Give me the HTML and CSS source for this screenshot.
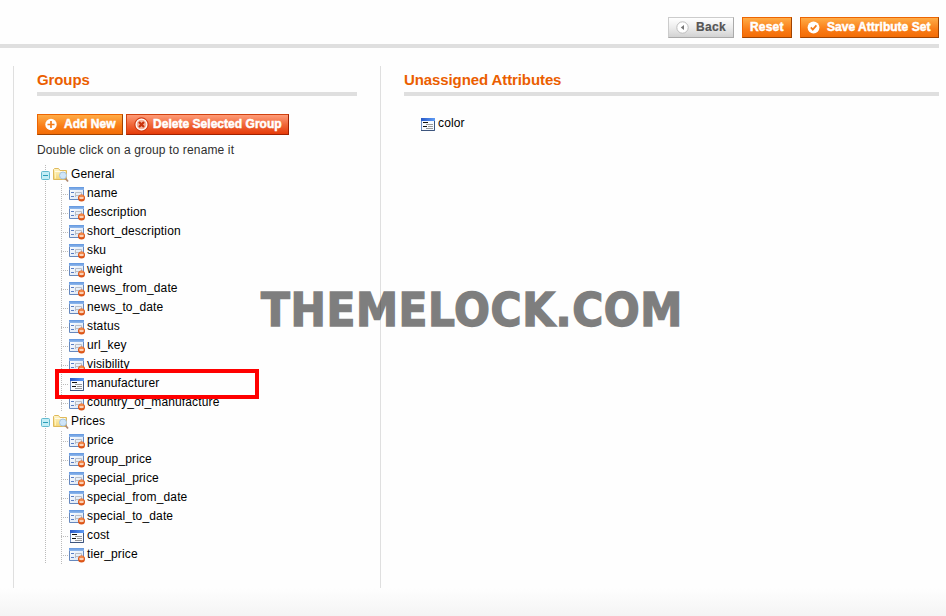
FILE: index.html
```html
<!DOCTYPE html>
<html lang="en">
<head>
<meta charset="utf-8">
<title>Edit Attribute Set</title>
<link rel="stylesheet" href="styles.css">
</head>
<body>
<svg class="defs" width="0" height="0" aria-hidden="true">
  <defs>
    <linearGradient id="blue" x1="0" y1="0" x2="0" y2="1"><stop offset="0" stop-color="#6196df"/><stop offset="1" stop-color="#91b9ec"/></linearGradient>
    <linearGradient id="royal" x1="0" y1="0" x2="1" y2="0"><stop offset="0" stop-color="#2859c8"/><stop offset="1" stop-color="#5f9cf5"/></linearGradient>
    <linearGradient id="paper" x1="0" y1="0" x2="1" y2="1"><stop offset="0" stop-color="#fff"/><stop offset="1" stop-color="#d5e3f5"/></linearGradient>
    <linearGradient id="gold" x1="0" y1="0" x2="0" y2="1"><stop offset="0" stop-color="#fff6cb"/><stop offset="1" stop-color="#f3d577"/></linearGradient>
    <symbol id="sys" viewBox="0 0 16 16">
      <path d="M.5 1.500h14v12H.5z" fill="url(#paper)" stroke="#6688bd"/>
      <path d="M0 1h15v3H0z" fill="url(#blue)"/>
      <path d="M2 6.500h3M2 10.500h3" stroke="#5b7fc4"/>
      <path d="M6.500 11V6.500H12.500V9.500H7" fill="none" stroke="#b9bec6"/>
      <circle cx="12.500" cy="12" r="3.500" fill="#dc5518"/>
      <circle cx="12.500" cy="11.200" r="2.400" fill="#f28a4b"/>
      <path d="M10.500 12h4" stroke="#fff" stroke-width="1.200"/>
    </symbol>
    <symbol id="attr" viewBox="0 0 16 16">
      <path d="M1.500 2.500h13v12h-13z" fill="#f7faff" stroke="#6f8fc4"/>
      <path d="M1 2h14v3H1z" fill="url(#royal)"/>
      <path d="M3 6.500h5M3 10.500h4" stroke="#111"/>
      <path d="M6 8.500h7M6 12.500h7M8 10.500h5" stroke="#9a9a9a"/>
      <path d="M1 14.500h13.500V5" fill="none" stroke="#3d557d"/>
    </symbol>
    <symbol id="folder" viewBox="0 0 16 16">
      <path d="M.5 12.500V2.500L1.500 1.500H5.500L7 3.500H13.500V12.500z" fill="url(#gold)" stroke="#dfb95b"/>
      <path d="M2 4.500h10" stroke="#fffbe8"/>
      <path d="M2.500 5.500v6" stroke="#fff3bb"/>
      <circle cx="10" cy="8.500" r="3.500" fill="#cfe5f7" stroke="#a5c4e2"/>
      <path d="M12.500 11.500L15 14.500" stroke="#b08a70" stroke-width="1.800"/>
    </symbol>
    <symbol id="minus" viewBox="0 0 9 9">
      <rect x=".5" y=".5" width="8" height="8" rx="1" fill="#c3eef6" stroke="#62b9ce"/>
      <path d="M2 4.500h5" stroke="#2c9db8"/>
    </symbol>
  </defs>
</svg>
<header class="toolbar">
  <button class="btn back"><svg width="13" height="13" viewBox="0 0 13 13"><circle cx="6.500" cy="6.500" r="5.700" fill="#fff" stroke="#bdbdbd"/><path d="M8 4v5L4.800 6.500z" fill="#777"/></svg><span>Back</span></button>
  <button class="btn reset"><span>Reset</span></button>
  <button class="btn save"><svg width="13" height="13" viewBox="0 0 13 13"><circle cx="6.500" cy="6.500" r="5.900" fill="#fff"/><path d="M3.800 6.400l2 2.200 3.600-4.200" fill="none" stroke="#f47d1c" stroke-width="1.700"/></svg><span>Save Attribute Set</span></button>
</header>
<main class="columns">
  <section class="groups">
    <h2><span>Groups</span></h2>
    <div class="actions">
      <button class="btn add"><svg width="13" height="13" viewBox="0 0 13 13"><circle cx="6" cy="6.500" r="5.700" fill="#fff"/><path d="M6 3v7M2.500 6.500h7" stroke="#f47d1c" stroke-width="1.700"/></svg><span>Add New</span></button>
      <button class="btn delete"><svg width="15" height="15" viewBox="0 0 15 15"><circle cx="7.500" cy="7.500" r="6.700" fill="#e0542b" stroke="#cf3a12"/><circle cx="7.500" cy="7.500" r="5.400" fill="#f4b39c" stroke="#fff" stroke-width="1.200"/><path d="M5 5l5 5M10 5l-5 5" stroke="#c9320c" stroke-width="2.200"/></svg><span>Delete Selected Group</span></button>
    </div>
    <p class="hint"><span>Double click on a group to rename it</span></p>
    <div class="tree">
      <div class="group">
        <div class="folder"><svg class="toggle"><use href="#minus"/></svg><svg class="icon"><use href="#folder"/></svg><span>General</span></div>
        <ul>
          <li><svg class="icon"><use href="#sys"/></svg><span>name</span></li>
          <li><svg class="icon"><use href="#sys"/></svg><span>description</span></li>
          <li><svg class="icon"><use href="#sys"/></svg><span>short_description</span></li>
          <li><svg class="icon"><use href="#sys"/></svg><span>sku</span></li>
          <li><svg class="icon"><use href="#sys"/></svg><span>weight</span></li>
          <li><svg class="icon"><use href="#sys"/></svg><span>news_from_date</span></li>
          <li><svg class="icon"><use href="#sys"/></svg><span>news_to_date</span></li>
          <li><svg class="icon"><use href="#sys"/></svg><span>status</span></li>
          <li><svg class="icon"><use href="#sys"/></svg><span>url_key</span></li>
          <li><svg class="icon"><use href="#sys"/></svg><span>visibility</span></li>
          <li class="marked"><svg class="icon"><use href="#attr"/></svg><span>manufacturer</span></li>
          <li><svg class="icon"><use href="#sys"/></svg><span>country_of_manufacture</span></li>
        </ul>
      </div>
      <div class="group">
        <div class="folder"><svg class="toggle"><use href="#minus"/></svg><svg class="icon"><use href="#folder"/></svg><span>Prices</span></div>
        <ul>
          <li><svg class="icon"><use href="#sys"/></svg><span>price</span></li>
          <li><svg class="icon"><use href="#sys"/></svg><span>group_price</span></li>
          <li><svg class="icon"><use href="#sys"/></svg><span>special_price</span></li>
          <li><svg class="icon"><use href="#sys"/></svg><span>special_from_date</span></li>
          <li><svg class="icon"><use href="#sys"/></svg><span>special_to_date</span></li>
          <li><svg class="icon"><use href="#attr"/></svg><span>cost</span></li>
          <li><svg class="icon"><use href="#sys"/></svg><span>tier_price</span></li>
        </ul>
      </div>
    </div>
  </section>
  <section class="unassigned">
    <h2><span>Unassigned Attributes</span></h2>
    <div class="loose"><svg class="icon"><use href="#attr"/></svg><span>color</span></div>
  </section>
</main>
<footer class="fade"></footer>
<div class="watermark">THEMELOCK.COM</div>
</body>
</html>
```

FILE: styles.css
```css
*, *::after { box-sizing: border-box; }
body {
  margin: 0;
  width: 946px;
  height: 616px;
  overflow: hidden;
  position: relative;
  display: flex;
  flex-direction: column;
  background: #fefefe;
  color: #000;
  font: 12px/19px "Liberation Sans", Arial, sans-serif;
  letter-spacing: 0.14px;
}
.defs { position: absolute; }
svg { display: block; flex: none; }
.toolbar {
  display: flex;
  justify-content: flex-end;
  gap: 8px;
  width: 939px;
  height: 48px;
  padding-top: 17px;
  border-bottom: 4px solid #dfdfdf;
}
.btn {
  display: flex;
  align-items: center;
  height: 21px;
  margin: 0;
  padding: 0 0 0 7px;
  border: 1px solid;
  border-color: #ed6502 #a04300 #a04300 #ed6502;
  background: linear-gradient(#ffac47, #f97c16 60%, #f36c06);
  color: #fff;
  font: bold 12px/19px "Liberation Sans", Arial, sans-serif;
  letter-spacing: 0.03px;
  -webkit-text-stroke: 0.5px currentColor;
  white-space: nowrap;
}
.btn.back {
  width: 66px;
  border-color: #ccc #aaa #aaa #ccc;
  background: linear-gradient(#fff, #ececec 50%, #d2d2d2);
  color: #555;
  letter-spacing: 0.3px;
  -webkit-text-stroke-width: 0.2px;
}
.btn.back span { margin-left: 7px; }
.btn.reset { width: 50px; letter-spacing: 0.2px; }
.btn.save { width: 139px; padding-left: 6px; }
.btn.save span { margin-left: 7px; }
.btn.add { width: 86px; }
.btn.add span { margin-left: 6px; }
.btn.delete {
  width: 163px;
  border-color: #d04110 #a02100 #a02100 #d04110;
  background: linear-gradient(#ff9c78, #f0683a 50%, #e63b09);
}
.btn.delete span { margin-left: 4px; }
.columns {
  display: flex;
  height: 522px;
  margin: 18px 7px 0 13px;
}
.groups {
  width: 367px;
  padding: 0 23px;
  border-left: 1px solid #dfdfdf;
}
.unassigned {
  flex: 1;
  padding-left: 23px;
  border-left: 1px solid #dfdfdf;
}
h2 {
  height: 30px;
  margin: 0;
  padding-top: 4px;
  border-bottom: 4px solid #dfdfdf;
  color: #eb5e00;
  font-size: 15px;
  line-height: 20px;
  letter-spacing: -0.1px;
}
.actions { display: flex; gap: 3px; margin-top: 18px; }
.hint { margin: 6px 0 5px; color: #2f2f2f; }
.tree { margin-left: 4px; }
.folder, .tree li, .loose { display: flex; height: 19px; }
.group {
  background: repeating-linear-gradient(#bbb 0 1px, transparent 1px 2px) 4px 0 / 1px 100% no-repeat;
}
.folder .toggle { width: 9px; height: 9px; margin: 6px 3px 0 0; }
.icon { width: 16px; height: 16px; margin-top: 2px; }
.folder .icon { margin-right: 2px; }
ul {
  list-style: none;
  margin: 0;
  padding: 0 0 0 20px;
  background: repeating-linear-gradient(#bbb 0 1px, transparent 1px 2px) 20px 0 / 1px 100% no-repeat;
}
.tree li {
  position: relative;
  padding-left: 8px;
  background: repeating-linear-gradient(90deg, #bbb 0 1px, transparent 1px 2px) 0 10px / 7px 1px no-repeat;
}
.tree li .icon { margin-right: 2px; }
.marked::after {
  content: "";
  position: absolute;
  z-index: 1;
  left: -6px;
  top: -5px;
  width: 204px;
  height: 30px;
  border: 4px solid #f00;
}
.loose { margin: 18px 0 0 16px; }
.loose .icon { margin-right: 2px; }
.fade { height: 28px; background: linear-gradient(#fefefe, #f4f4f4); }
.watermark {
  position: absolute;
  left: 261px;
  top: 282px;
  color: #000;
  opacity: 0.5;
  font: bold 47px/56px "DejaVu Sans Condensed", "DejaVu Sans", sans-serif;
  font-stretch: condensed;
  letter-spacing: 0.6px;
  -webkit-text-stroke: 1.4px #000;
  white-space: nowrap;
}
```
